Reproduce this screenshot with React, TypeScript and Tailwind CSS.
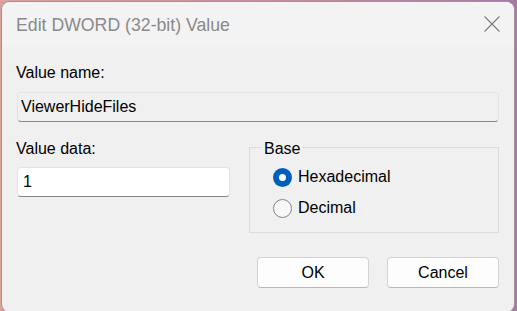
import React from "react";

const font = { fontFamily: '"Liberation Sans", Arial, sans-serif' };

function Radio({ checked, label }: { checked: boolean; label: string }) {
  return (
    <div className="flex items-center h-[20px]">
      {checked ? (
        <div className="w-[19px] h-[19px] rounded-full bg-[#005fb8] flex items-center justify-center">
          <div className="w-[7px] h-[7px] rounded-full bg-white" />
        </div>
      ) : (
        <div className="w-[19px] h-[19px] rounded-full border border-[#858585] bg-[#f7f7f7]" />
      )}
      <span className="ml-[6px] text-[16px] leading-[20px] text-black">{label}</span>
    </div>
  );
}

export default function App() {
  return (
    <div
      className="w-[517px] h-[311px] overflow-hidden bg-[linear-gradient(90deg,#d9a39a_0%,#c990a0_50%,#a57aa3_100%)] pt-[2px] pl-[2px]"
      style={font}
    >
      <div className="w-[512px] h-[310px] rounded-[8px] bg-[#f0f0f0] shadow-[0_0_0_1px_#a58f9f] overflow-hidden flex flex-col">
        {/* Title bar */}
        <div className="h-[45px] bg-[#f3f3f3] flex items-start justify-between pl-[14px] pr-[14px] pt-[11px]">
          <span className="text-[17.7px] leading-[24px] text-[#8a8a8a]">Edit DWORD (32-bit) Value</span>
          <svg width="16" height="16" viewBox="0 0 16 16" className="mt-[3px]">
            <path d="M0.5 0.5 L15.5 15.5 M15.5 0.5 L0.5 15.5" stroke="#7a7a7a" strokeWidth="1.1" fill="none" />
          </svg>
        </div>
        {/* Body */}
        <div className="px-[15px] flex flex-col">
          <div className="mt-[16px] text-[16px] leading-[20px] text-black -ml-[1px]">Value name:</div>
          <div className="mt-[9px] h-[30px] w-[482px] rounded-[4px] border border-[#e3e3e3] border-b-[#8a8a8a] bg-[#f0f0f0] flex items-center pl-[3px]">
            <span className="text-[16px] leading-[20px] text-black">ViewerHideFiles</span>
          </div>
          <div className="flex">
            <div className="w-[213px] flex flex-col">
              <div className="mt-[17px] text-[16px] leading-[20px] text-black -ml-[1px]">Value data:</div>
              <div className="mt-[8px] h-[30px] w-[213px] rounded-[4px] border border-[#e3e3e3] border-b-[#868686] bg-white flex items-center pl-[5px]">
                <span className="text-[16px] leading-[20px] text-black">1</span>
              </div>
            </div>
            <div className="ml-[19px] mt-[25px] w-[252px] h-[86px] border border-[#dcdcdc] relative flex flex-col pl-[23px] pt-[19px] gap-[11px]">
              <span className="absolute -top-[9px] left-[12px] px-[2px] bg-[#f0f0f0] text-[16px] leading-[20px] text-black">Base</span>
              <Radio checked label="Hexadecimal" />
              <Radio checked={false} label="Decimal" />
            </div>
          </div>
          <div className="mt-[24px] flex justify-end gap-[18px]">
            <button className="w-[112px] h-[31px] rounded-[4px] border border-[#d4d4d4] border-b-[#b8b8b8] bg-[#fdfdfd] text-[16px] leading-[20px] text-black">
              OK
            </button>
            <button className="w-[112px] h-[31px] rounded-[4px] border border-[#d4d4d4] border-b-[#b8b8b8] bg-[#fdfdfd] text-[16px] leading-[20px] text-black">
              Cancel
            </button>
          </div>
        </div>
      </div>
    </div>
  );
}
